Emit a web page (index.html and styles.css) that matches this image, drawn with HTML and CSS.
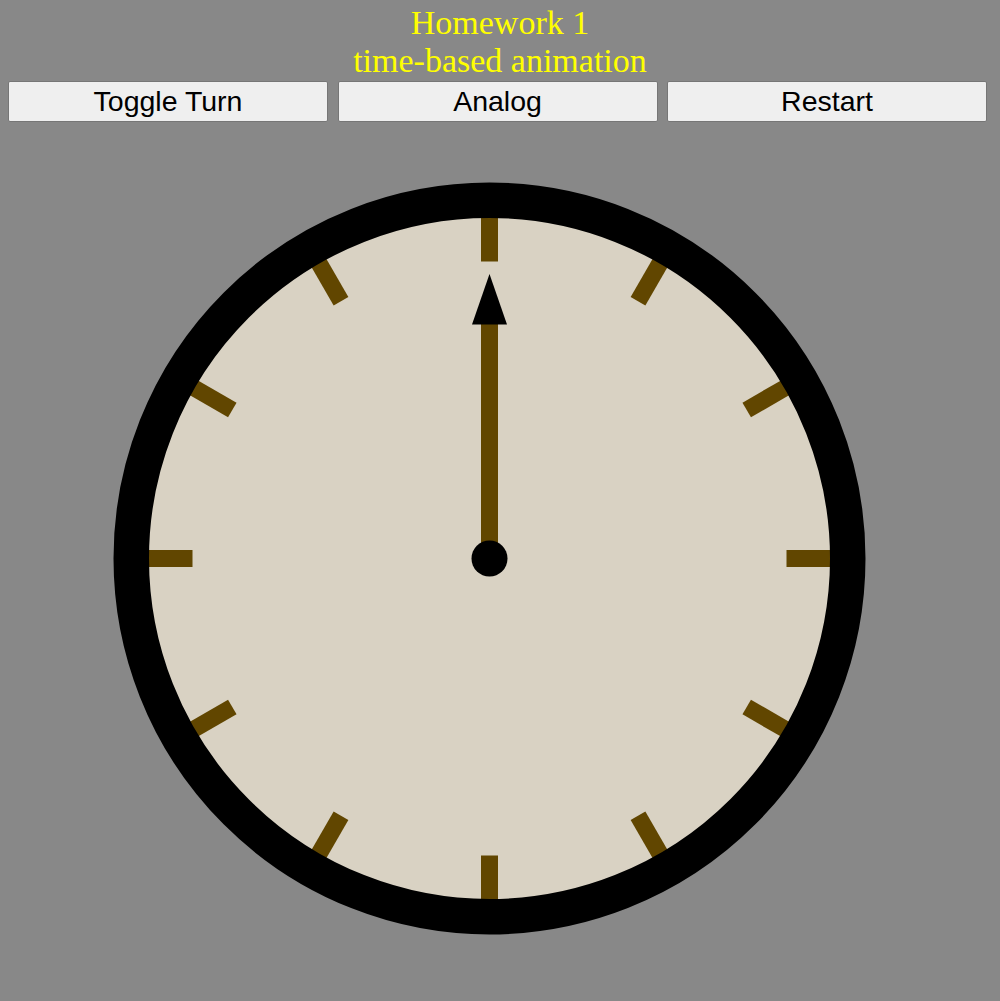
FILE: index.html
```html
<!DOCTYPE html>
<html>
<head>
<meta charset="utf-8">
<title>Homework 1</title>
<link rel="stylesheet" href="styles.css">
</head>
<body>
<header class="title">
  <div class="title-line">Homework 1</div>
  <div class="title-line">time-based animation</div>
</header>
<nav class="controls">
  <button class="btn">Toggle Turn</button>
  <button class="btn">Analog</button>
  <button class="btn">Restart</button>
</nav>
<svg class="clock" viewBox="0 122 1000 879" width="1000" height="879" xmlns="http://www.w3.org/2000/svg">
  <circle class="face" cx="489.5" cy="558.5" r="358"/>
  <g transform="translate(489.5 558.5)">
    <rect class="tick" x="-8.5" y="-342" width="17" height="45" transform="rotate(0)"/>
    <rect class="tick" x="-8.5" y="-342" width="17" height="45" transform="rotate(30)"/>
    <rect class="tick" x="-8.5" y="-342" width="17" height="45" transform="rotate(60)"/>
    <rect class="tick" x="-8.5" y="-342" width="17" height="45" transform="rotate(90)"/>
    <rect class="tick" x="-8.5" y="-342" width="17" height="45" transform="rotate(120)"/>
    <rect class="tick" x="-8.5" y="-342" width="17" height="45" transform="rotate(150)"/>
    <rect class="tick" x="-8.5" y="-342" width="17" height="45" transform="rotate(180)"/>
    <rect class="tick" x="-8.5" y="-342" width="17" height="45" transform="rotate(210)"/>
    <rect class="tick" x="-8.5" y="-342" width="17" height="45" transform="rotate(240)"/>
    <rect class="tick" x="-8.5" y="-342" width="17" height="45" transform="rotate(270)"/>
    <rect class="tick" x="-8.5" y="-342" width="17" height="45" transform="rotate(300)"/>
    <rect class="tick" x="-8.5" y="-342" width="17" height="45" transform="rotate(330)"/>
  </g>
  <circle class="ring" cx="489.5" cy="558.5" r="358.25"/>
  <rect class="hand" x="481" y="324" width="17" height="222"/>
  <polygon class="arrow" points="489.5,274 472,324.5 507,324.5"/>
  <circle class="hub" cx="489.5" cy="558.5" r="18"/>
</svg>
</body>
</html>
```
FILE: styles.css
```css
html, body {
  margin: 0;
  padding: 0;
  background: #888888;
  overflow: hidden;
}

.title {
  padding-top: 4px;
  text-align: center;
  color: #ffff00;
  font-family: "Liberation Serif", "Times New Roman", serif;
  font-size: 34px;
  line-height: 38px;
  height: 77px;
}

.controls {
  display: flex;
  gap: 9.5px;
  padding: 0 8px;
}

.btn {
  width: 320px;
  height: 41px;
  margin: 0;
  padding: 0;
  background: #efefef;
  border: 1px solid #767676;
  border-radius: 2px;
  color: #000000;
  font-family: "Liberation Sans", Arial, sans-serif;
  font-size: 28.5px;
  line-height: 39px;
}

.clock {
  display: block;
}

.face {
  fill: #d9d2c3;
}

.tick,
.hand {
  fill: #614600;
}

.ring {
  fill: none;
  stroke: #000000;
  stroke-width: 35.5;
}

.arrow,
.hub {
  fill: #000000;
}
```
